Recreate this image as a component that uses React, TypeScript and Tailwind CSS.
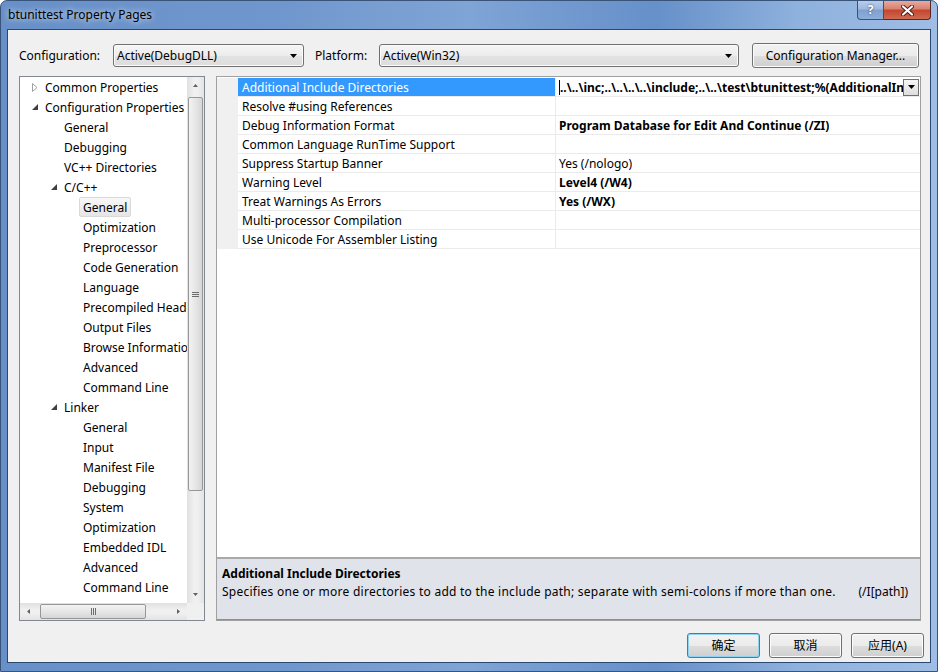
const ui = "font-['Noto_Sans','Noto_Sans_CJK_SC',sans-serif]"

type TreeRow = { label: string; level: 0 | 1 | 2; arrow?: "open" | "closed"; selected?: boolean }

const treeRows: TreeRow[] = [
  { label: "Common Properties", level: 0, arrow: "closed" },
  { label: "Configuration Properties", level: 0, arrow: "open" },
  { label: "General", level: 1 },
  { label: "Debugging", level: 1 },
  { label: "VC++ Directories", level: 1 },
  { label: "C/C++", level: 1, arrow: "open" },
  { label: "General", level: 2, selected: true },
  { label: "Optimization", level: 2 },
  { label: "Preprocessor", level: 2 },
  { label: "Code Generation", level: 2 },
  { label: "Language", level: 2 },
  { label: "Precompiled Headers", level: 2 },
  { label: "Output Files", level: 2 },
  { label: "Browse Information", level: 2 },
  { label: "Advanced", level: 2 },
  { label: "Command Line", level: 2 },
  { label: "Linker", level: 1, arrow: "open" },
  { label: "General", level: 2 },
  { label: "Input", level: 2 },
  { label: "Manifest File", level: 2 },
  { label: "Debugging", level: 2 },
  { label: "System", level: 2 },
  { label: "Optimization", level: 2 },
  { label: "Embedded IDL", level: 2 },
  { label: "Advanced", level: 2 },
  { label: "Command Line", level: 2 },
]

const levelPad = { 0: "pl-[11px]", 1: "pl-[30px]", 2: "pl-[49px]" }

const props: { name: string; value: string; bold: boolean }[] = [
  { name: "Additional Include Directories", value: "..\\..\\inc;..\\..\\..\\..\\include;..\\..\\test\\btunittest;%(AdditionalIncludeDirectories)", bold: true },
  { name: "Resolve #using References", value: "", bold: false },
  { name: "Debug Information Format", value: "Program Database for Edit And Continue (/ZI)", bold: true },
  { name: "Common Language RunTime Support", value: "", bold: false },
  { name: "Suppress Startup Banner", value: "Yes (/nologo)", bold: false },
  { name: "Warning Level", value: "Level4 (/W4)", bold: true },
  { name: "Treat Warnings As Errors", value: "Yes (/WX)", bold: true },
  { name: "Multi-processor Compilation", value: "", bold: false },
  { name: "Use Unicode For Assembler Listing", value: "", bold: false },
]

const Arrow = ({ dir, color = "#000" }: { dir: "up" | "down" | "left" | "right"; color?: string }) => {
  const pts = { up: "0,4 7,4 3.5,0", down: "0,0 7,0 3.5,4", left: "4,0 4,7 0,3.5", right: "0,0 0,7 4,3.5" }[dir]
  const flat = dir === "up" || dir === "down"
  return (
    <svg width={flat ? 7 : 4} height={flat ? 4 : 7} viewBox={flat ? "0 0 7 4" : "0 0 4 7"}>
      <polygon points={pts} fill={color} />
    </svg>
  )
}

const ScrollTri = ({ dir }: { dir: "up" | "down" | "left" | "right" }) => {
  const pts = { up: "0,3 5,3 2.5,0", down: "0,0 5,0 2.5,3", left: "3,0 3,5 0,2.5", right: "0,0 0,5 3,2.5" }[dir]
  const flat = dir === "up" || dir === "down"
  return (
    <svg width={flat ? 5 : 3} height={flat ? 3 : 5} viewBox={flat ? "0 0 5 3" : "0 0 3 5"}>
      <polygon points={pts} fill="#606060" />
    </svg>
  )
}

const Combo = ({ value, width }: { value: string; width: string }) => (
  <div className={`${width} flex h-[23px] items-center justify-between rounded-[3px] border border-[#707070] bg-[linear-gradient(#f6f6f6_0%,#ececec_50%,#e3e3e3_51%,#dcdcdc_100%)] pl-[3px] pr-[6px] shadow-[inset_0_0_0_1px_#fbfbfb]`}>
    <span className="text-[12px] leading-none">{value}</span>
    <Arrow dir="down" />
  </div>
)

const Button = ({ label, primary, width }: { label: string; primary?: boolean; width: string }) => (
  <div
    className={`${width} flex h-[25px] items-center justify-center rounded-[3px] border bg-[linear-gradient(#f2f2f2_0%,#ebebeb_50%,#dddddd_51%,#cfcfcf_100%)] text-[12px] ${
      primary ? "border-[#3c7fb1] shadow-[inset_0_0_0_1px_#8fd3f3]" : "border-[#707070] shadow-[inset_0_0_0_1px_#fcfcfc]"
    }`}
  >
    {label}
  </div>
)

const TreeArrow = ({ kind }: { kind?: "open" | "closed" }) => {
  if (kind === "closed")
    return (
      <svg width="6" height="9" viewBox="0 0 6 9">
        <polygon points="0.5,0.5 5,4.5 0.5,8.5" fill="none" stroke="#a0a0a0" />
      </svg>
    )
  if (kind === "open")
    return (
      <svg width="6" height="6" viewBox="0 0 6 6">
        <polygon points="6,0 6,6 0,6" fill="#404040" />
      </svg>
    )
  return null
}

const Tree = () => (
  <div className="flex h-[545px] w-[186px] flex-col border border-[#828790] bg-white">
    <div className="flex min-h-0 flex-1">
      <div className="min-w-0 flex-1 overflow-hidden">
        {treeRows.map((r, i) => (
          <div key={i} className={`flex h-[20px] items-center whitespace-nowrap text-[12px] ${levelPad[r.level]}`}>
            <span className="flex w-[14px] shrink-0 items-center pl-[1px]">
              <TreeArrow kind={r.arrow} />
            </span>
            {r.selected ? (
              <span className="-ml-[4px] flex h-[20px] items-center rounded-[2px] border border-[#d9d9d9] bg-[linear-gradient(#f8f8f8,#e5e5e5)] px-[3px] pt-[1px]">
                {r.label}
              </span>
            ) : (
              <span className="pt-[2px]">{r.label}</span>
            )}
          </div>
        ))}
      </div>
      <div className="flex w-[17px] shrink-0 flex-col items-center bg-[linear-gradient(90deg,#e0e0e0,#f0f0f0_40%,#f0f0f0_60%,#e3e3e3)]">
        <div className="flex h-[17px] w-full items-center justify-center">
          <ScrollTri dir="up" />
        </div>
        <div className="mt-[3px] flex h-[394px] w-[15px] items-center justify-center rounded-[2px] border border-[#979797] bg-[linear-gradient(90deg,#f3f3f3,#e6e6e6_50%,#d6d6d6)]">
          <div className="flex flex-col gap-[1px]">
            <div className="h-[1px] w-[7px] bg-[#6c6c6c]" />
            <div className="h-[1px] w-[7px] bg-[#6c6c6c]" />
            <div className="h-[1px] w-[7px] bg-[#6c6c6c]" />
          </div>
        </div>
        <div className="flex-1" />
        <div className="flex h-[17px] w-full items-center justify-center">
          <ScrollTri dir="down" />
        </div>
      </div>
    </div>
    <div className="flex h-[17px] shrink-0">
      <div className="flex flex-1 items-center bg-[linear-gradient(#e0e0e0,#f0f0f0_40%,#f0f0f0_60%,#e3e3e3)]">
        <div className="flex h-[17px] w-[17px] items-center justify-center">
          <ScrollTri dir="left" />
        </div>
        <div className="ml-[3px] flex h-[15px] w-[106px] items-center justify-center rounded-[2px] border border-[#979797] bg-[linear-gradient(#f3f3f3,#e6e6e6_50%,#d6d6d6)]">
          <div className="flex gap-[1px]">
            <div className="h-[7px] w-[1px] bg-[#6c6c6c]" />
            <div className="h-[7px] w-[1px] bg-[#6c6c6c]" />
            <div className="h-[7px] w-[1px] bg-[#6c6c6c]" />
          </div>
        </div>
        <div className="flex-1" />
        <div className="flex h-[17px] w-[17px] items-center justify-center">
          <ScrollTri dir="right" />
        </div>
      </div>
      <div className="w-[17px] bg-[#f0f0f0]" />
    </div>
  </div>
)

const PropGrid = () => (
  <div className="flex h-[545px] w-[705px] flex-col border border-[#a0a0a0] bg-white">
    <div className="flex-1 pt-[1px]">
      {props.map((p, i) => (
        <div key={p.name} className="flex h-[19px] text-[12px]">
          <div className="w-[21px] shrink-0 bg-[#f0f0f0]" />
          <div
            className={`flex w-[318px] shrink-0 items-center whitespace-nowrap border-b border-r border-[#ebebeb] pl-[4px] pt-[1px] ${
              i === 0 ? "bg-[#3399ff] text-white" : ""
            }`}
          >
            {p.name}
          </div>
          <div className={`flex min-w-0 flex-1 items-center border-b border-[#ebebeb] ${p.bold ? "font-bold" : ""}`}>
            {i === 0 ? (
              <>
                <div className="ml-[3px] h-[15px] w-[1px] shrink-0 bg-black" />
                <span className="min-w-0 flex-1 overflow-hidden whitespace-nowrap pt-[1px]">{p.value}</span>
                <div className="mr-[1px] flex h-[17px] w-[16px] shrink-0 items-center justify-center border border-[#707070] bg-[linear-gradient(#f6f6f6,#dedede)]">
                  <Arrow dir="down" />
                </div>
              </>
            ) : (
              <span className="overflow-hidden whitespace-nowrap pl-[3px] pt-[1px]">{p.value}</span>
            )}
          </div>
        </div>
      ))}
    </div>
    <div className="h-[63px] shrink-0 border-b border-t-2 border-b-[#8f8f8f] border-t-[#a8a8a8] bg-[#e0e3ea] pl-[5px] pr-[12px] pt-[7px] text-[12px]">
      <div className="font-bold leading-[16px]">Additional Include Directories</div>
      <div className="mt-[2px] flex justify-between leading-[16px]">
        <span className="tracking-[0.25px]">
          Specifies one or more directories to add to the include path; separate with semi-colons if more than one.
        </span>
        <span>(/I[path])</span>
      </div>
    </div>
  </div>
)

export default function App() {
  return (
    <div className={`h-[672px] w-[938px] overflow-hidden bg-white text-black ${ui}`}>
      <div className="flex h-[672px] w-[938px] flex-col rounded-t-[7px] border border-[#3a5479] bg-[linear-gradient(90deg,#6890c8_0%,#7097cd_30%,#7fa4d6_50%,#6690c9_70%,#8eb1dd_85%,#9fbde5_100%)]">
        <div className="flex h-[28px] shrink-0 items-start">
          <div className="flex h-[27px] items-center pl-[7px] text-[12px] [text-shadow:0_0_6px_#ffffff]">btunittest Property Pages</div>
          <div className="ml-auto mr-[6px] flex">
            <div className="flex h-[19px] w-[27px] items-center justify-center rounded-bl-[4px] border border-t-0 border-[#36527a] bg-[linear-gradient(#b8cde9,#9db8de_45%,#7f9fcd_50%,#8eaedb)] text-[12px] font-bold leading-none text-white [text-shadow:0_0_2px_#1d3557]">
              ?
            </div>
            <div className="flex h-[19px] w-[47px] items-center justify-center rounded-br-[4px] border border-l-0 border-t-0 border-[#5a2620] bg-[linear-gradient(#e9a99c,#d8806f_45%,#c2452f_50%,#d16a4f)]">
              <svg width="13" height="11" viewBox="0 0 13 11">
                <path d="M2 1.5 L11 9.5 M11 1.5 L2 9.5" stroke="#4a1a14" strokeWidth="4" strokeLinecap="round" />
                <path d="M2 1.5 L11 9.5 M11 1.5 L2 9.5" stroke="#ffffff" strokeWidth="2.2" strokeLinecap="round" />
              </svg>
            </div>
          </div>
        </div>
        <div className="mx-[6px] mb-[8px] flex flex-1 flex-col border border-[#2b4870] bg-[#f0f0f0]">
          <div className="mt-[13px] flex h-[25px] items-center pl-[11px] pr-[11px] text-[12px]">
            <span className="w-[94px]">Configuration:</span>
            <Combo value="Active(DebugDLL)" width="w-[191px]" />
            <span className="ml-[11px] w-[64px]">Platform:</span>
            <Combo value="Active(Win32)" width="w-[360px]" />
            <div className="ml-auto">
              <Button label="Configuration Manager..." width="w-[167px]" />
            </div>
          </div>
          <div className="mt-[8px] flex pl-[11px]">
            <Tree />
            <div className="ml-[11px]">
              <PropGrid />
            </div>
          </div>
          <div className="mt-[12px] flex justify-end gap-[9px] pr-[6px]">
            <Button label="确定" primary width="w-[73px]" />
            <Button label="取消" width="w-[73px]" />
            <Button label="应用(A)" width="w-[73px]" />
          </div>
        </div>
      </div>
    </div>
  )
}
